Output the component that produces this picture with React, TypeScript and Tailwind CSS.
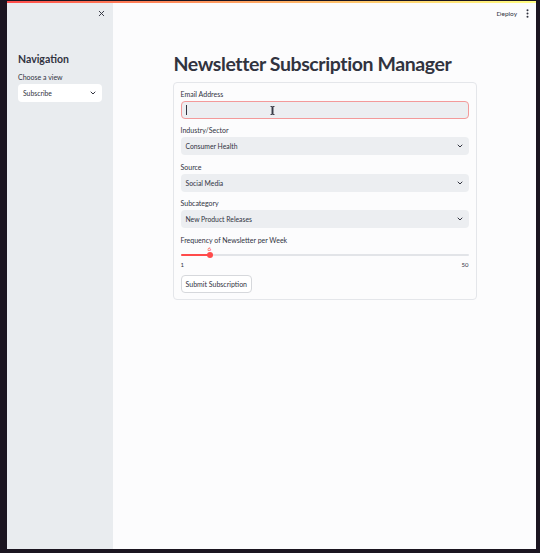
import { ChevronDown, X } from "lucide-react";

const font = { fontFamily: '"Lato", "Liberation Sans", sans-serif' };

function SelectBox({ label, value, gap }: { label: string; value: string; gap: string }) {
  return (
    <div className={gap}>
      <div className="h-[9px] text-[7px] leading-[9px] text-[#31333f]">{label}</div>
      <div className="mt-[2px] flex h-[18px] items-center justify-between rounded-[4px] bg-[#eceef1] pl-[5px] pr-[5px]">
        <span className="text-[6.8px] text-[#31333f]">{value}</span>
        <ChevronDown className="h-[8px] w-[8px] text-[#31333f]" strokeWidth={3} />
      </div>
    </div>
  );
}

export default function App() {
  return (
    <div
      className="flex h-[553px] w-[540px] flex-col bg-[#1b1520] pb-[4px] pl-[7px] pr-[4px] pt-px"
      style={font}
    >
      <div className="h-[2px] bg-gradient-to-r from-[#ff4b4b] to-[#fffd80]" />
      <div className="flex min-h-0 flex-1">
        <aside className="w-[106px] bg-[#e9ecef]">
          <div className="flex justify-end pr-[7px] pt-[6px]">
            <X className="h-[9px] w-[9px] text-[#31333f]" strokeWidth={2.5} />
          </div>
          <div className="px-[11px] pt-[34px]">
            <h2 className="text-[10.5px] font-bold leading-[14px] text-[#31333f]">Navigation</h2>
            <div className="mt-[7px] text-[7px] leading-[9px] text-[#31333f]">Choose a view</div>
            <div className="mt-[2px] flex h-[18px] items-center justify-between rounded-[4px] bg-white pl-[5px] pr-[5px]">
              <span className="text-[6.8px] text-[#31333f]">Subscribe</span>
              <ChevronDown className="h-[8px] w-[8px] text-[#31333f]" strokeWidth={3} />
            </div>
          </div>
        </aside>
        <main className="relative flex-1 bg-[#fcfcfd]">
          <div className="flex h-[20px] items-center justify-end gap-[9px] pr-[7px] pt-[1px]">
            <span className="text-[6.5px] text-[#31333f]">Deploy</span>
            <svg width="3" height="9" viewBox="0 0 3 9">
              <circle cx="1.5" cy="1.2" r="1" fill="#31333f" />
              <circle cx="1.5" cy="4.5" r="1" fill="#31333f" />
              <circle cx="1.5" cy="7.8" r="1" fill="#31333f" />
            </svg>
          </div>
          <div className="mx-auto w-[304px] pt-[28px]">
            <h1 className="whitespace-nowrap pl-px text-[19.5px] font-bold leading-[26px] tracking-[-0.4px] text-[#31333f]">
              Newsletter Subscription Manager
            </h1>
            <div className="mt-[5px] rounded-[4px] border border-[#e4e6ea] px-[7px] pb-[6px] pt-[7px]">
              <div className="h-[9px] text-[7px] leading-[9px] text-[#31333f]">Email Address</div>
              <div className="relative mt-[2px] flex h-[18px] items-center rounded-[4px] border border-[#f39a9a] bg-[#eceef1] pl-[4px]">
                <div className="h-[10px] w-px bg-[#31333f]" />
                <svg className="absolute left-[88px] top-[4px]" width="5" height="9" viewBox="0 0 5 9">
                  <path d="M0.5 0.5h1.5v8h-1.5M4.5 0.5h-1.5v8h1.5M2.5 0.5v8" fill="none" stroke="#31333f" strokeWidth="0.9" />
                </svg>
              </div>
              <SelectBox gap="mt-[7px]" label="Industry/Sector" value="Consumer Health" />
              <SelectBox gap="mt-[8px]" label="Source" value="Social Media" />
              <SelectBox gap="mt-[7px]" label="Subcategory" value="New Product Releases" />
              <div className="mt-[8px]">
                <div className="h-[9px] text-[7px] leading-[9px] text-[#31333f]">
                  Frequency of Newsletter per Week
                </div>
                <div className="relative h-[16px]">
                  <div className="absolute left-0 right-0 top-[9px] h-[2px] rounded bg-[#e2e4e8]" />
                  <div className="absolute left-0 top-[9px] h-[2px] w-[29px] rounded bg-[#ff4b4b]" />
                  <div className="absolute left-[26px] top-[7px] h-[6px] w-[6px] rounded-full bg-[#ff4b4b]" />
                  <span className="absolute left-[27px] top-0 text-[6.5px] leading-[7px] text-[#ff4b4b]">6</span>
                </div>
                <div className="flex justify-between text-[6px] leading-[8px] text-[#31333f]">
                  <span>1</span>
                  <span>50</span>
                </div>
              </div>
              <button className="mt-[6px] h-[18px] rounded-[4px] border border-[#d6d8dc] bg-white px-[4px] text-[7px] text-[#31333f]">
                Submit Subscription
              </button>
            </div>
          </div>
        </main>
      </div>
    </div>
  );
}
